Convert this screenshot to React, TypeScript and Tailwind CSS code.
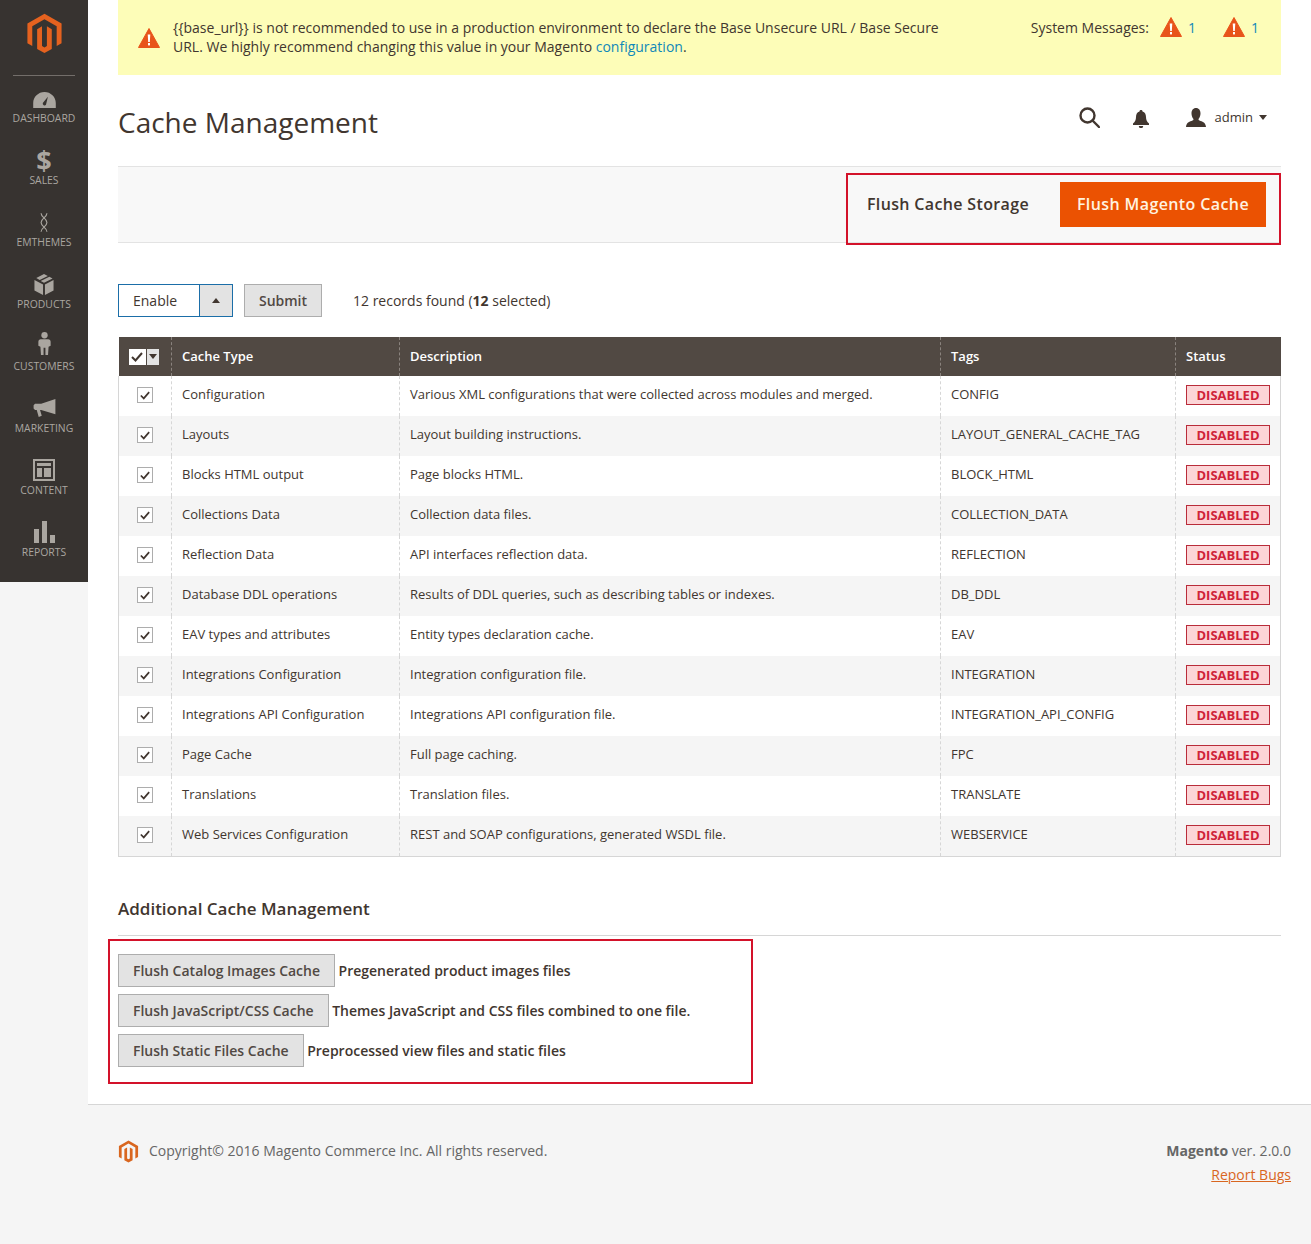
const rows = [
  ["Configuration", "Various XML configurations that were collected across modules and merged.", "CONFIG"],
  ["Layouts", "Layout building instructions.", "LAYOUT_GENERAL_CACHE_TAG"],
  ["Blocks HTML output", "Page blocks HTML.", "BLOCK_HTML"],
  ["Collections Data", "Collection data files.", "COLLECTION_DATA"],
  ["Reflection Data", "API interfaces reflection data.", "REFLECTION"],
  ["Database DDL operations", "Results of DDL queries, such as describing tables or indexes.", "DB_DDL"],
  ["EAV types and attributes", "Entity types declaration cache.", "EAV"],
  ["Integrations Configuration", "Integration configuration file.", "INTEGRATION"],
  ["Integrations API Configuration", "Integrations API configuration file.", "INTEGRATION_API_CONFIG"],
  ["Page Cache", "Full page caching.", "FPC"],
  ["Translations", "Translation files.", "TRANSLATE"],
  ["Web Services Configuration", "REST and SOAP configurations, generated WSDL file.", "WEBSERVICE"],
];

const extraFlush = [
  ["Flush Catalog Images Cache", "Pregenerated product images files"],
  ["Flush JavaScript/CSS Cache", "Themes JavaScript and CSS files combined to one file."],
  ["Flush Static Files Cache", "Preprocessed view files and static files"],
];

function Logo({ className }: { className: string }) {
  return (
    <svg viewBox="0 0 43 48" className={className} fill="currentColor">
      <path d="M41.5 12.3 21.5.8 1.5 12.3v23.1l5.7 3.3-.04-23.1 14.3-8.3 14.3 8.3v23.1l5.7-3.3z" />
      <path d="M24.3 38.7l-2.85 1.65-2.87-1.65V15.6l-5.7 3.3v23.1l8.57 4.95 8.57-4.95V18.9l-5.7-3.3z" />
    </svg>
  );
}

function Warning({ className }: { className: string }) {
  return (
    <svg viewBox="0 0 22 20" className={className}>
      <path d="M11 .5 21.500 19.500H.5z" fill="#e8541a" stroke="#e8541a" strokeLinejoin="round" />
      <path d="M9.700 6.500h2.600l-.5 7.500h-1.600z" fill="#fff" />
      <rect x="10" y="15" width="2" height="2.400" fill="#fff" />
    </svg>
  );
}

const navItems = [
  {
    label: "Dashboard",
    icon: (
      <svg viewBox="0 0 24 17" className="w-[23px] h-[16px] mt-[3px]" fill="currentColor">
        <path d="M12 0C5.400 0 0 5.200 0 11.800V17h24v-5.200C24 5.200 18.600 0 12 0zm1.600 13.600a2 2 0 0 1-3.400-1.900L15.600 5z" fillRule="evenodd" />
      </svg>
    ),
  },
  { label: "Sales", icon: <span className="text-[27px] leading-[28px] font-bold">$</span> },
  {
    label: "Emthemes",
    icon: (
      <svg viewBox="0 0 12 24" className="w-[10px] h-[23px]" fill="none" stroke="currentColor" strokeWidth="1.400">
        <path d="M2.500 1c0 5 7 6 7 11s-7 6-7 11M9.500 1c0 5-7 6-7 11s7 6 7 11" />
      </svg>
    ),
  },
  {
    label: "Products",
    icon: (
      <svg viewBox="0 0 20 22" className="w-[20px] h-[21px]" fill="currentColor">
        <path d="M10 0l4 2-8.500 4.200-3.600-1.900zM15.600 2.800 19 4.600l-9 4.600-3.400-1.800zM0 6.200l9 4.700V22L0 17.200zM20 6.200v11L11 22V10.900z" />
      </svg>
    ),
  },
  {
    label: "Customers",
    icon: (
      <svg viewBox="0 0 14 25" className="w-[13px] h-[25px] -mt-[6px]" fill="currentColor">
        <circle cx="7" cy="3.600" r="3.400" />
        <path d="M3 8h8c1.600 0 2.600 1 2.600 2.600V15l-2.200 1-.6 9H8V17H6v8H3.200l-.6-9L.4 15v-4.400C.4 9 1.400 8 3 8z" />
      </svg>
    ),
  },
  {
    label: "Marketing",
    icon: (
      <svg viewBox="0 0 23 19" className="w-[23px] h-[18px]" fill="currentColor">
        <path d="M23 0v16L8 11.500H6.800l1.800 6.300L5.400 19 3.300 11.500H1.500L0 10V6.500L1.500 5H8z" />
      </svg>
    ),
  },
  {
    label: "Content",
    icon: (
      <svg viewBox="0 0 22 22" className="w-[22px] h-[22px]" fill="none" stroke="currentColor">
        <rect x="1" y="1" width="20" height="20" strokeWidth="2" />
        <rect x="4" y="4" width="14" height="3" fill="currentColor" stroke="none" />
        <rect x="4" y="9" width="5" height="9" fill="currentColor" stroke="none" />
        <rect x="11" y="9" width="7" height="9" fill="currentColor" stroke="none" />
      </svg>
    ),
  },
  {
    label: "Reports",
    icon: (
      <svg viewBox="0 0 21 22" className="w-[21px] h-[22px]" fill="currentColor">
        <rect x="0" y="8" width="5" height="14" />
        <rect x="8" y="0" width="5" height="22" />
        <rect x="16" y="14" width="5" height="8" />
      </svg>
    ),
  },
];

function Sidebar() {
  return (
    <aside className="w-[88px] h-[582px] shrink-0 bg-[#373330] text-[#aaa6a0]">
      <div className="h-[76px] mx-[13px] pt-[13px] border-b border-[#736e6a] flex justify-center items-start">
        <Logo className="w-[37px] h-[41px] text-[#e5621f]" />
      </div>
      <nav>
        {navItems.map((item) => (
          <div key={item.label} className="h-[62px] pt-[8px] flex flex-col items-center">
            <div className="h-[28px] flex items-center justify-center">{item.icon}</div>
            <div className="text-[10.4px] leading-[12px] uppercase">{item.label}</div>
          </div>
        ))}
      </nav>
    </aside>
  );
}

function CheckMark({ className }: { className: string }) {
  return (
    <svg viewBox="0 0 12 10" className={className} fill="none" stroke="#41362f" strokeWidth="2">
      <path d="M1 5l3.500 3.500L11 1" />
    </svg>
  );
}

function CacheTable() {
  return (
    <table className="w-[1162px] table-fixed border-collapse text-[13px] text-[#41362f]">
      <colgroup>
        <col className="w-[53px]" />
        <col className="w-[228px]" />
        <col className="w-[541px]" />
        <col className="w-[235px]" />
        <col className="w-[105px]" />
      </colgroup>
      <thead>
        <tr className="h-[39px] bg-[#514943] text-white font-semibold text-left">
          <th className="border-r border-dashed border-[#8a837e]">
            <div className="flex w-[30px] h-[16px] ml-[10px]">
              <span className="w-[17px] bg-white flex items-center justify-center">
                <CheckMark className="w-[12px] h-[10px]" />
              </span>
              <span className="w-[12px] ml-[1px] bg-[#e3e3e3] flex items-center justify-center">
                <span className="border-x-[4px] border-x-transparent border-t-[5px] border-t-[#41362f]" />
              </span>
            </div>
          </th>
          <th className="px-[10px] font-semibold border-r border-dashed border-[#8a837e]">Cache Type</th>
          <th className="px-[10px] font-semibold border-r border-dashed border-[#8a837e]">Description</th>
          <th className="px-[10px] font-semibold border-r border-dashed border-[#8a837e]">Tags</th>
          <th className="px-[10px] font-semibold">Status</th>
        </tr>
      </thead>
      <tbody className="border-x border-b border-[#d6d6d6]">
        {rows.map((row, i) => (
          <tr key={row[0]} className={i % 2 === 1 ? "h-[40px] bg-[#f5f5f5]" : "h-[40px] bg-white"}>
            <td className="pb-[2px] border-r border-dashed border-[#d6d6d6]">
              <span className="w-[16px] h-[16px] mx-auto bg-white border border-[#adadad] flex items-center justify-center">
                <CheckMark className="w-[10px] h-[9px]" />
              </span>
            </td>
            <td className="px-[10px] pb-[2px] border-r border-dashed border-[#d6d6d6]">{row[0]}</td>
            <td className="px-[10px] pb-[2px] border-r border-dashed border-[#d6d6d6]">{row[1]}</td>
            <td className="px-[10px] pb-[2px] border-r border-dashed border-[#d6d6d6]">{row[2]}</td>
            <td className="px-[10px] pb-[2px]">
              <span className="block w-[84px] h-[20px] bg-[#fcd5d7] border border-[#b92c3a] text-[#cf2338] text-center text-[13px] leading-[18px] font-bold">
                DISABLED
              </span>
            </td>
          </tr>
        ))}
      </tbody>
    </table>
  );
}

export default function App() {
  return (
    <div className="flex min-h-[1244px] bg-[#f5f5f5] font-['Open_Sans',sans-serif] text-[#41362f] text-[14px]">
      <Sidebar />
      <main className="flex-1 min-w-0 flex flex-col">
        <div className="bg-white px-[30px] pb-[20px]">
          <div className="h-[75px] bg-[#fdfdb8] flex items-start pt-[18px] pl-[20px] pr-[22px]">
            <Warning className="w-[22px] h-[20px] mt-[10px] shrink-0" />
            <p className="ml-[13px] w-[775px] leading-[19px]">
              {"{{base_url}}"} is not recommended to use in a production environment to declare the Base Unsecure URL / Base Secure URL. We highly recommend changing this value in your Magento{" "}
              <span className="text-[#0f88b8]">configuration</span>.
            </p>
            <div className="ml-auto -mt-[1px] flex items-center leading-[19px]">
              <span>System Messages:</span>
              <Warning className="w-[22px] h-[20px] ml-[11px]" />
              <span className="ml-[6px] text-[#0f88b8]">1</span>
              <Warning className="w-[22px] h-[20px] ml-[27px]" />
              <span className="ml-[6px] text-[#0f88b8]">1</span>
            </div>
          </div>

          <div className="h-[91px] flex items-center justify-between">
            <h1 className="text-[28px] font-normal text-[#41362f] mt-[2px]">Cache Management</h1>
            <div className="flex items-center mr-[14px] -mt-[6px]">
              <svg viewBox="0 0 21 21" className="w-[21px] h-[21px]" fill="none" stroke="#41362f" strokeWidth="2.400">
                <circle cx="8.500" cy="8.500" r="7" />
                <path d="M13.500 13.500 20 20" strokeLinecap="round" />
              </svg>
              <svg viewBox="0 0 16 18" className="w-[16px] h-[18px] ml-[33px] mt-[2px]" fill="#41362f">
                <path d="M8 0c1 0 1.500.6 1.500 1.400C12 2.200 13 4.200 13 7c0 3 1 5 3 6.500V15H0v-1.500C2 12 3 10 3 7c0-2.800 1-4.800 3.500-5.600C6.500.6 7 0 8 0zM5.800 16h4.400a2.200 2.200 0 0 1-4.400 0z" />
              </svg>
              <svg viewBox="0 0 20 19" className="w-[20px] h-[19px] ml-[37px]" fill="#41362f">
                <path d="M10 0c3 0 4.500 2.400 4.500 5.500 0 2.200-.8 4.200-2 5.500 0 1 .5 1.500 2 2 3 1 5 1.800 5.500 6H0c.5-4.200 2.500-5 5.500-6 1.500-.5 2-1 2-2-1.200-1.300-2-3.300-2-5.500C5.500 2.400 7 0 10 0z" />
              </svg>
              <span className="ml-[9px] text-[13px]">admin</span>
              <span className="ml-[6px] border-x-[4px] border-x-transparent border-t-[5px] border-t-[#41362f]" />
            </div>
          </div>

          <div className="h-[77px] bg-[#f8f8f8] border-y border-[#e3e3e3] flex justify-end">
            <div className="w-[435px] h-[72px] mt-[6px] pt-[7px] pr-[13px] pl-[19px] border-2 border-[#d3122a] flex items-start justify-between shrink-0">
              <span className="h-[45px] pb-[2px] flex items-center text-[16px] font-semibold tracking-[0.35px] text-[#41362f]">Flush Cache Storage</span>
              <span className="w-[206px] h-[45px] pb-[2px] bg-[#eb5202] text-[#fff3e0] text-[16px] font-semibold tracking-[0.4px] flex items-center justify-center">
                Flush Magento Cache
              </span>
            </div>
          </div>

          <div className="mt-[41px] flex items-center h-[33px]">
            <div className="w-[115px] h-[33px] flex border border-[#1b6ea8]">
              <span className="w-[80px] pl-[14px] leading-[31px] bg-white">Enable</span>
              <span className="flex-1 border-l border-[#1b6ea8] bg-[#e3e3e3] flex items-center justify-center">
                <span className="border-x-[4px] border-x-transparent border-b-[5px] border-b-[#41362f]" />
              </span>
            </div>
            <span className="ml-[11px] w-[78px] h-[33px] bg-[#e3e3e3] border border-[#adadad] text-[#514943] font-semibold flex items-center justify-center">
              Submit
            </span>
            <span className="ml-[31px]">
              12 records found (<b className="font-bold">12</b> selected)
            </span>
          </div>

          <div className="mt-[20px]">
            <CacheTable />
          </div>

          <h2 className="mt-[39px] h-[26px] text-[17px] leading-[26px] font-semibold text-[#41362f]">Additional Cache Management</h2>
          <div className="mt-[13px] border-t border-[#d6d6d6]" />
          <div className="-ml-[10px] mt-[3px] w-[645px] h-[145px] pt-[13px] pl-[8px] border-2 border-[#d3122a] flex flex-col gap-[7px]">
            {extraFlush.map(([button, text]) => (
              <div key={button} className="flex items-center h-[33px]">
                <span className="h-[33px] px-[14px] bg-[#e3e3e3] border border-[#adadad] text-[#514943] font-semibold flex items-center">{button}</span>
                <span className="ml-[3.5px] font-semibold">{text}</span>
              </div>
            ))}
          </div>
        </div>

        <footer className="flex-1 border-t border-[#d6d6d6] pl-[30px] pr-[20px] pt-[34px] flex justify-between items-start">
          <div className="flex items-center h-[24px] text-[#666]">
            <Logo className="w-[21px] h-[23px] mt-[2px] text-[#d9661f]" />
            <span className="ml-[10px]">Copyright© 2016 Magento Commerce Inc. All rights reserved.</span>
          </div>
          <div className="text-right leading-[24px] text-[#666]">
            <div>
              <b className="font-bold">Magento</b> ver. 2.0.0
            </div>
            <div className="text-[#d9661f] underline">Report Bugs</div>
          </div>
        </footer>
      </main>
    </div>
  );
}
